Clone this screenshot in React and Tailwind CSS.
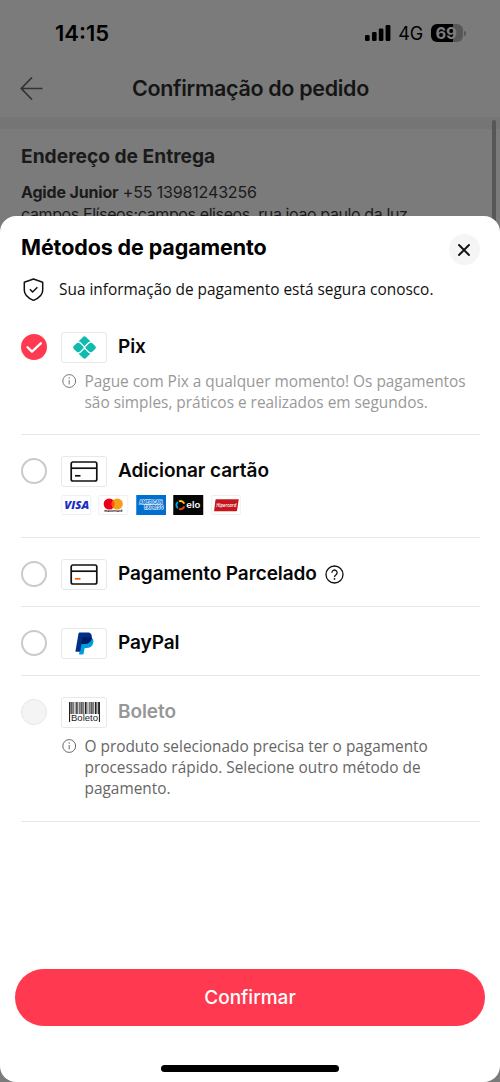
import clsx from 'clsx'

const BAR_WIDTHS = [2, 1, 1, 1, 2, 1, 1, 2, 1, 1, 2, 1, 1, 1, 2, 1, 1, 2, 1, 2]

function Signal() {
  return (
    <svg className="h-4 w-[26px]" viewBox="0 0 26 16" aria-hidden="true">
      <rect x="0" y="10" width="4.6" height="6" rx="1.3" />
      <rect x="7" y="7" width="4.6" height="9" rx="1.3" />
      <rect x="13.8" y="3.5" width="4.6" height="12.5" rx="1.3" />
      <rect x="20.6" y="0" width="4.8" height="16" rx="1.3" />
    </svg>
  )
}

function Battery() {
  return (
    <div className="flex items-center gap-px">
      <div className="flex h-[18px] w-8 items-center justify-center rounded-[6px] bg-linear-to-r from-black from-70% to-[#575757] to-70% text-[16.5px] leading-none font-bold text-[#7c7c7c]">
        <span className="-ml-0.5 tracking-[-0.3px]">69</span>
      </div>
      <div className="h-[5px] w-[2px] rounded-r-full bg-[#575757]" />
    </div>
  )
}

function InfoIcon({ className }) {
  return (
    <svg className={clsx('mt-[3px] size-[15px] shrink-0', className)} viewBox="0 0 15 15" fill="none" stroke="currentColor" aria-hidden="true">
      <circle cx="7.2" cy="7" r="6.4" />
      <path d="M7.2 6v4.4" />
      <circle cx="7.2" cy="4" r=".7" fill="currentColor" stroke="none" />
    </svg>
  )
}

function PixLogo() {
  return (
    <svg className="size-[23px]" viewBox="0 0 24 24" fill="#0fbbad" aria-hidden="true">
      <path d="M5.7 5.7 10.2 1.2a2.5 2.5 0 0 1 3.6 0l4.5 4.5c-1 .1-1.9.5-2.6 1.2L12.5 10.1a.7.7 0 0 1-1 0L8.3 6.9A4.4 4.4 0 0 0 5.7 5.7Z" />
      <path d="M5.7 18.3l4.5 4.5a2.5 2.5 0 0 0 3.6 0l4.5-4.5c-1-.1-1.9-.5-2.6-1.2L12.5 13.9a.7.7 0 0 0-1 0L8.3 17.1a4.4 4.4 0 0 1-2.6 1.2Z" />
      <path d="M4.5 7 1.1 10.2a2.5 2.5 0 0 0 0 3.6L4.5 17h.8c.8 0 1.5-.3 2-.8l3.5-3.5a1 1 0 0 0 0-1.4L7.3 7.8c-.5-.5-1.2-.8-2-.8Z" />
      <path d="M19.5 7l3.4 3.2a2.5 2.5 0 0 1 0 3.6L19.5 17h-.8c-.8 0-1.5-.3-2-.8l-3.5-3.5a1 1 0 0 1 0-1.4l3.5-3.5c.5-.5 1.2-.8 2-.8Z" />
    </svg>
  )
}

function CardIcon({ accent = '#111' }) {
  return (
    <svg className="h-[21px] w-7" viewBox="0 0 28 21" fill="none" stroke="#111" strokeWidth="1.7" aria-hidden="true">
      <rect x="1.2" y="1" width="25.6" height="19" rx="1.8" />
      <path d="M1.2 7.2h25.6" />
      <path d="M5 14.8h5.5" stroke={accent} />
    </svg>
  )
}

function PayPalLogo() {
  return (
    <svg className="h-[23px] w-[19px]" viewBox="0 0 19 23" aria-hidden="true">
      <path fill="#009cde" d="M16.4 5.5c1.7 1 2.4 2.8 1.9 5.2-.8 3.7-3.3 5.4-6.8 5.4h-1.2c-.5 0-.8.3-.9.8l-.8 4.9c-.1.5-.4.8-.9.8H4.6c-.4 0-.6-.3-.5-.7L6.5 8Z" />
      <path fill="#012f86" d="M4.8.4h7.4c3.5 0 5.2 2 4.5 5.5-.8 4-3.5 6-7.5 6H7.4c-.6 0-1 .3-1.1.9l-1 6.1c-.1.5-.4.8-.9.8H1c-.4 0-.6-.3-.5-.7L3.5 1.5c.1-.7.6-1.1 1.3-1.1Z" />
      <path fill="#001c64" d="M8.2 5.2h8.6c-.3 4.7-3.3 6.7-7.6 6.7H7.4c-.4 0-.7.1-.9.4l.9-6.4c.1-.4.4-.7.8-.7Z" />
    </svg>
  )
}

function BoletoLogo() {
  return (
    <svg className="h-[21px] w-[31px]" viewBox="0 0 31 21" aria-hidden="true">
      <rect x="0" y="0" width="1.1" height="20" fill="#222" />
      <rect x="29.9" y="0" width="1.1" height="20" fill="#222" />
      {BAR_WIDTHS.map((width, index) => (
        <rect key={index} x={1.5 + index * 1.43} y="0" width={width * 0.6} height="12" fill="#222" />
      ))}
      <text x="2" y="19.4" textLength="27" lengthAdjust="spacingAndGlyphs" fontFamily="Liberation Sans" fontSize="9.8" fill="#222">
        Boleto
      </text>
    </svg>
  )
}

function Brands() {
  return (
    <div className="mt-[9px] ml-[40.5px] flex gap-[6.9px]">
      <svg className="h-5 w-[30.5px]" viewBox="0 0 30 20" aria-label="Visa">
        <rect x=".5" y=".5" width="29" height="19" rx="1" fill="#fff" stroke="#efefef" />
        <text x="3" y="13.8" textLength="25" lengthAdjust="spacingAndGlyphs" fontFamily="Open Sans" fontStyle="italic" fontWeight="800" fontSize="11" fill="#1a2ec5">
          VISA
        </text>
      </svg>
      <svg className="h-5 w-[30.5px]" viewBox="0 0 30 20" aria-label="Mastercard">
        <rect x=".5" y=".5" width="29" height="19" rx="1" fill="#fff" stroke="#efefef" />
        <circle cx="11" cy="9" r="5.6" fill="#eb001b" />
        <circle cx="19" cy="9" r="5.6" fill="#f79e1b" />
        <path d="M15 5.1a5.6 5.6 0 0 1 0 7.8 5.6 5.6 0 0 1 0-7.8Z" fill="#ff5f00" />
        <text x="6" y="17" textLength="18" lengthAdjust="spacingAndGlyphs" fontFamily="Inter" fontWeight="700" fontSize="3.2" fill="#222">
          mastercard
        </text>
      </svg>
      <svg className="h-5 w-[30.5px]" viewBox="0 0 30 20" aria-label="American Express">
        <rect width="30" height="20" rx=".5" fill="#006fcf" />
        <g fontFamily="Inter" fontWeight="800" fontSize="4.4" fill="#006fcf" stroke="#fff" strokeWidth=".9" paintOrder="stroke">
          <text x="3" y="9" textLength="23" lengthAdjust="spacingAndGlyphs">
            AMERICAN
          </text>
          <text x="8" y="13.8" textLength="19" lengthAdjust="spacingAndGlyphs">
            EXPRESS
          </text>
        </g>
      </svg>
      <svg className="h-5 w-[30.5px]" viewBox="0 0 30 20" aria-label="Elo">
        <rect width="30" height="20" rx=".5" fill="#060606" />
        <g fill="none" strokeWidth="1.9">
          <path d="M5.7 6.3A4 4 0 0 1 11 8.6" stroke="#ffcb05" />
          <path d="M4.6 13.2A4 4 0 0 1 4.6 7" stroke="#00a4e0" />
          <path d="M11 11.4a4 4 0 0 1-5.3 2.5" stroke="#ef4123" />
        </g>
        <text x="13" y="13.2" textLength="14" lengthAdjust="spacingAndGlyphs" fontFamily="Inter" fontWeight="600" fontSize="8.5" fill="#fff">
          elo
        </text>
      </svg>
      <svg className="h-5 w-[30.5px]" viewBox="0 0 30 20" aria-label="Hipercard">
        <rect x=".5" y=".5" width="29" height="19" rx="1" fill="#fff" stroke="#efefef" />
        <path d="M5 4.2h22.5L25.8 15.5a1 1 0 0 1-1 .8H2.8L4.2 5a1 1 0 0 1 .8-.8Z" fill="#c4161c" />
        <text x="5" y="12" textLength="20" lengthAdjust="spacingAndGlyphs" fontFamily="Open Sans" fontStyle="italic" fontWeight="600" fontSize="5.8" fill="#fff">
          Hipercard
        </text>
      </svg>
    </div>
  )
}

function Radio({ checked, disabled }) {
  if (checked) {
    return (
      <span className="size-[26px] rounded-full bg-[#ff394f]">
        <svg className="size-[26px]" viewBox="0 0 26 26" fill="none" stroke="#fff" strokeWidth="2.3" strokeLinecap="round" strokeLinejoin="round" aria-hidden="true">
          <path d="M6.5 13.2 11 17.6l8.8-8.3" />
        </svg>
      </span>
    )
  }
  return <span className={clsx('size-[26px] rounded-full', disabled ? 'border border-[#e6e6e6] bg-[#f4f4f4]' : 'border-2 border-[#cacaca]')} />
}

function Method({ logo, label, className, checked, disabled, help, children }) {
  return (
    <section className={clsx('border-b border-[#e6e6e6]', className)}>
      <div className="flex h-[30px] items-center">
        <Radio checked={checked} disabled={disabled} />
        <span className="ml-[14.5px] flex h-[31px] w-[46px] shrink-0 items-center justify-center rounded-[3px] border border-[#e8e8e8]">{logo}</span>
        <h2 className={clsx('-mt-px ml-[11px] text-[19px] leading-[24px] font-semibold tracking-[-0.08px]', disabled ? 'text-[#979797]' : 'text-[#070707]')}>{label}</h2>
        {help && (
          <svg className="ml-2 size-[19px]" viewBox="0 0 19 19" fill="none" stroke="#111" strokeWidth="1.3" aria-label="Ajuda">
            <circle cx="9.5" cy="9.5" r="8.5" />
            <path d="M6.9 7.7a2.6 2.6 0 1 1 4.2 2c-1 .7-1.6 1.1-1.6 2.2" />
            <circle cx="9.5" cy="13.9" r=".9" fill="#111" stroke="none" />
          </svg>
        )}
      </div>
      {children}
    </section>
  )
}

function Note({ lines, className, iconClass }) {
  return (
    <div className={clsx('mt-[9px] ml-[41px] flex gap-[8px] font-["Open_Sans",sans-serif] text-[15.4px] leading-[21px] whitespace-nowrap', className)}>
      <InfoIcon className={iconClass} />
      <div>
        {lines.map((line) => (
          <p key={line}>{line}</p>
        ))}
      </div>
    </div>
  )
}

export default function App() {
  return (
    <div className='relative h-[1082px] w-[500px] overflow-hidden bg-[#7b7b7b] font-["Inter",sans-serif]'>
      <div className="flex h-[66px] items-center justify-between pr-[34px] pl-[55px]">
        <span className="text-[22px] font-semibold text-black">14:15</span>
        <div className="flex items-center">
          <Signal />
          <span className="mr-2 ml-[7px] pt-px text-[18px] tracking-[-0.2px]">4G</span>
          <Battery />
        </div>
      </div>
      <header className="flex h-[51px] items-center pb-[7px] pl-5">
        <svg className="size-[23px]" viewBox="0 0 23 23" fill="none" stroke="#333" strokeWidth="1.7" aria-hidden="true">
          <path d="M12 .5 1.3 11.5 12 22.5M1.3 11.5h21.2" />
        </svg>
        <h1 className="ml-[89px] text-[21.5px] font-semibold tracking-[-0.33px] whitespace-nowrap text-[#151515]">Confirmação do pedido</h1>
      </header>
      <div className="h-3 bg-[#757575]" />
      <main className="pt-[14px] pl-[21px] text-[#1a1a1a]">
        <h2 className="text-[19.2px] leading-[26px] font-bold">Endereço de Entrega</h2>
        <p className="mt-[12px] text-[16px] leading-[22px] tracking-[-0.16px] whitespace-nowrap">
          <strong className="font-bold">Agide Junior</strong> +55 13981243256
        </p>
        <p className="text-[16px] leading-[22px] tracking-[-0.39px] whitespace-nowrap">campos Elíseos;campos eliseos, rua joao paulo da luz</p>
      </main>
      <div className="absolute top-[120px] right-1 h-[120px] w-1 rounded-t bg-[#575757]" />

      <div className="absolute inset-x-0 top-[216px] flex h-[866px] flex-col rounded-[16px] bg-white">
        <div className="flex h-[66px] items-center justify-between pr-[20.5px] pl-[21px]">
          <h1 className="pb-[3px] text-[21.5px] font-bold tracking-[-0.12px] text-black">Métodos de pagamento</h1>
          <button type="button" aria-label="Fechar" className="mt-px grid size-[31px] place-items-center rounded-full bg-[#f5f5f5]">
            <svg className="size-3" viewBox="0 0 12 12" fill="none" stroke="#111" strokeWidth="1.9" strokeLinecap="round" aria-hidden="true">
              <path d="m1 1 10 10M11 1 1 11" />
            </svg>
          </button>
        </div>
        <div className="flex h-[15px] items-center pl-[23px]">
          <svg className="h-[23px] w-[21px]" viewBox="0 0 21 23" fill="none" stroke="#111" strokeWidth="1.5" strokeLinejoin="round" aria-hidden="true">
            <path d="M10.5 1 19.7 4.2v8c0 4.5-3.7 7.8-9.2 10.2C5 20 1.3 16.7 1.3 12.2v-8Z" />
            <path d="m6.9 11.3 2.7 2.7 4.8-4.7" />
          </svg>
          <p className='ml-[15px] font-["Open_Sans",sans-serif] text-[15.4px] whitespace-nowrap text-[#111]'>Sua informação de pagamento está segura conosco.</p>
        </div>

        <div className="mt-[35px] mr-[20px] ml-[20.5px]">
          <Method checked logo={<PixLogo />} label="Pix" className="h-[103px]">
            <Note lines={['Pague com Pix a qualquer momento! Os pagamentos', 'são simples, práticos e realizados em segundos.']} className="text-[#999]" iconClass="text-[#777]" />
          </Method>
          <Method logo={<CardIcon />} label="Adicionar cartão" className="h-[103px] pt-[21px]">
            <Brands />
          </Method>
          <Method logo={<CardIcon accent="#ff5a00" />} label="Pagamento Parcelado" className="h-[69px] pt-[21px]" help />
          <Method logo={<PayPalLogo />} label="PayPal" className="h-[69px] pt-[21px]" />
          <Method disabled logo={<BoletoLogo />} label="Boleto" className="h-[146px] pt-[21px]">
            <Note lines={['O produto selecionado precisa ter o pagamento', 'processado rápido. Selecione outro método de', 'pagamento.']} className="text-[#666]" iconClass="text-[#666]" />
          </Method>
        </div>

        <button type="button" className="mx-[15px] mt-auto mb-[56px] h-[57px] shrink-0 rounded-full bg-[#ff394f] pt-0.5 text-[19px] font-medium text-white">
          Confirmar
        </button>
        <div className="absolute bottom-[10.5px] left-[161px] h-[7px] w-[178px] rounded-full bg-black" />
      </div>
    </div>
  )
}
